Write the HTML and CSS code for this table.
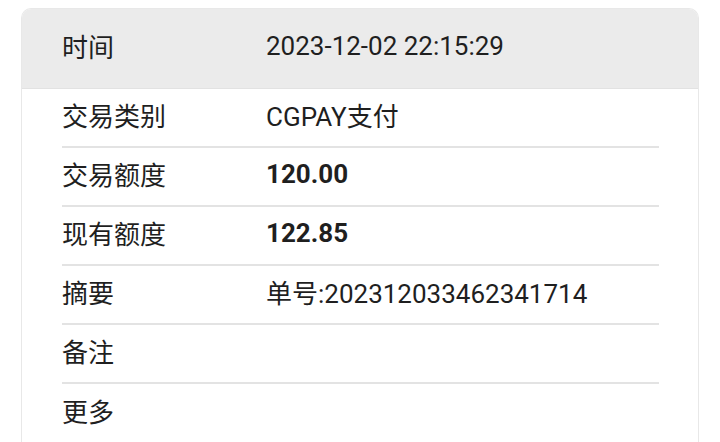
FILE: index.html
```html
<!DOCTYPE html>
<html lang="zh">
<head>
<meta charset="utf-8">
<link rel="stylesheet" href="styles.css">
</head>
<body>
<div class="card">
  <div class="head">
    <span class="label">时间</span>
    <span class="value">2023-12-02 22:15:29</span>
  </div>
  <div class="rows">
    <div class="row"><span class="label">交易类别</span><span class="value">CGPAY支付</span></div>
    <div class="row"><span class="label">交易额度</span><span class="value bold">120.00</span></div>
    <div class="row"><span class="label">现有额度</span><span class="value bold">122.85</span></div>
    <div class="row"><span class="label">摘要</span><span class="value">单号:202312033462341714</span></div>
    <div class="row"><span class="label">备注</span><span class="value"></span></div>
    <div class="row last"><span class="label">更多</span><span class="value"></span></div>
  </div>
</div>
</body>
</html>
```
FILE: styles.css
```css
html, body {
  margin: 0;
  padding: 0;
  background: #ffffff;
}
body {
  font-family: Roboto, "Noto Sans CJK SC", sans-serif;
  font-size: 26px;
  color: #1f1f1f;
  padding: 8px 21px 0 21px;
  width: 720px;
  height: 442px;
  box-sizing: border-box;
  overflow: hidden;
}
.card {
  border: 1px solid #e8e8e8;
  border-bottom: none;
  border-radius: 10px 10px 0 0;
  overflow: hidden;
  height: 434px;
  box-sizing: border-box;
}
.head {
  background: #ebebeb;
  height: 80px;
  box-sizing: border-box;
  display: flex;
  align-items: center;
  padding: 0 40px 6px 40px;
  border-bottom: 1px solid #e2e2e2;
}
.rows {
  padding: 0 39px 0 40px;
}
.row {
  display: flex;
  align-items: center;
  height: 59px;
  box-sizing: border-box;
  padding-bottom: 6px;
  border-bottom: 2px solid #e3e3e3;
}
.row.last {
  border-bottom: none;
}
.label {
  width: 204px;
  flex: none;
}
.value.bold {
  font-weight: 700;
}
```
